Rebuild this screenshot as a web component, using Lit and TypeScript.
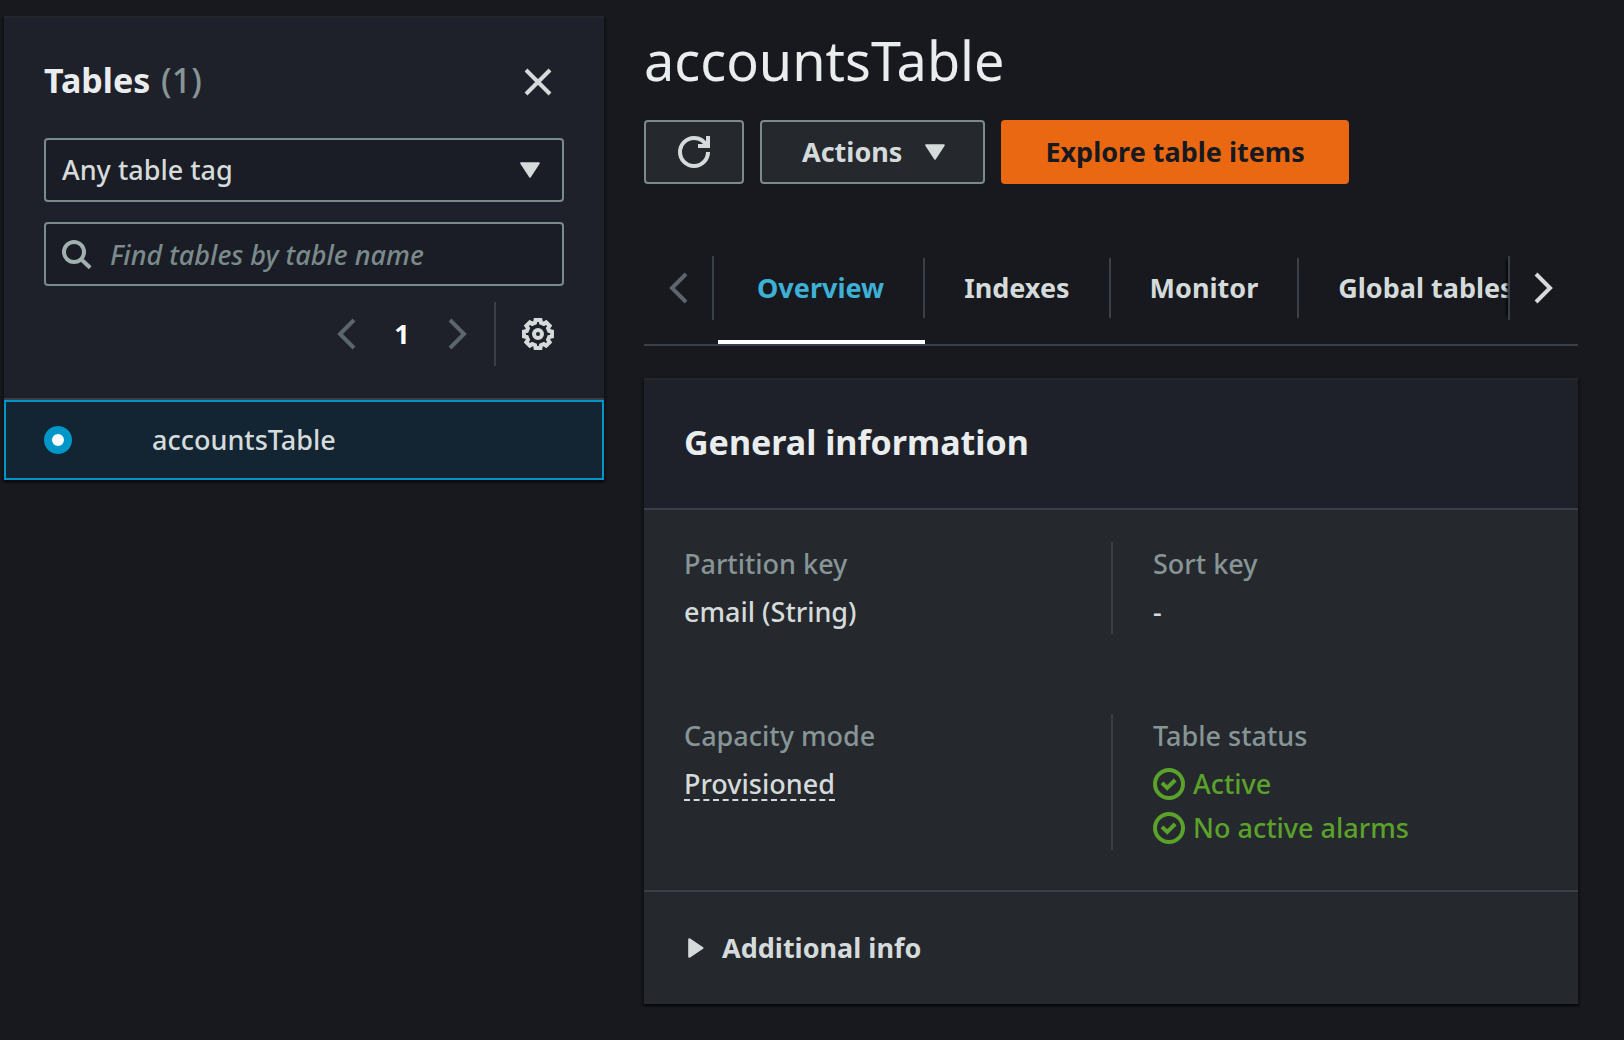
import { LitElement, html, svg, css, type TemplateResult } from "lit";
import { customElement, state } from "lit/decorators.js";

const icon = (cls: string, body: TemplateResult) =>
  html`<svg class="icon ${cls}" viewBox="0 0 16 16" aria-hidden="true">${body}</svg>`;

/** Outline of an eight-toothed gear centred on (8, 8). */
const gearOutline = () => {
  const profile = [[-10, 7.1], [10, 7.1], [15, 5.8], [30, 5.8]];
  const points: string[] = [];
  for (let tooth = 0; tooth < 8; tooth++) {
    for (const [angle, radius] of profile) {
      const a = ((tooth * 45 + angle) * Math.PI) / 180;
      points.push(`${(8 + radius * Math.cos(a)).toFixed(2)},${(8 + radius * Math.sin(a)).toFixed(2)}`);
    }
  }
  return points.join(" ");
};

const closeIcon = svg`<path d="m2 2 12 12M14 2 2 14" />`;
const searchIcon = svg`<circle cx="6" cy="7" r="5" /><path d="m9.6 10.6 4.5 4.3" />`;
const prevIcon = svg`<path d="m12 1-7 7 7 7" />`;
const nextIcon = svg`<path d="m4 1 7 7-7 7" />`;
const refreshIcon = svg`<path d="M15 8c0 3.87-3.13 7-7 7s-7-3.13-7-7 3.13-7 7-7c2.79 0 5.2 1.63 6.33 4" /><path d="M10 5h5V0" />`;
const caretDown = svg`<path class="solid" d="M3.6 4.6h8.8L8 11.3z" />`;
const caretRight = svg`<path class="solid" d="M4.6 3.6v8.8L11.3 8z" />`;
const checkIcon = svg`<circle cx="8" cy="8" r="7" /><path d="m4.5 7.4 2.6 2.6 4-4" />`;
const gearIcon = svg`<polygon points=${gearOutline()} /><circle cx="8" cy="8" r="2" />`;

@customElement("app-root")
export class AppRoot extends LitElement {
  @state() private activeTab = "Overview";

  private tabs = ["Overview", "Indexes", "Monitor", "Global tables"];

  static styles = css`
    :host {
      display: block;
      min-height: 100vh;
      background: #17191e;
      color: #d5dbdb;
      font: 500 27px/36px "Noto Sans", "Open Sans", sans-serif;
    }
    * {
      box-sizing: border-box;
    }
    h1,
    h2,
    dl,
    dd {
      margin: 0;
    }
    button,
    input,
    select {
      font: inherit;
      color: inherit;
      margin: 0;
    }
    button {
      background: none;
      border: 0;
      padding: 0;
      display: inline-flex;
      align-items: center;
      justify-content: center;
      cursor: pointer;
    }
    .icon {
      width: 32px;
      height: 32px;
      flex: none;
      display: block;
      fill: none;
      stroke: currentColor;
      stroke-width: 2;
    }
    .icon .solid {
      fill: currentColor;
      stroke-width: 1;
      stroke-linejoin: round;
    }
    .page {
      display: grid;
      grid-template-columns: 600px minmax(0, 1fr);
      align-items: start;
      gap: 40px;
      padding: 16px 46px 36px 4px;
    }
    .panel {
      border-top: 2px solid #23272b;
      box-shadow: 0 2px 2px rgba(0, 0, 0, 0.6), 2px 2px 2px rgba(0, 0, 0, 0.2), -2px 2px 2px rgba(0, 0, 0, 0.2);
    }

    .tables {
      background: #1e2129;
    }
    .tables-head {
      padding: 40px 40px 32px;
      display: grid;
      gap: 20px;
      border-bottom: 2px solid #3a3e47;
    }
    .title-row {
      display: flex;
      align-items: center;
      justify-content: space-between;
      height: 48px;
      margin-bottom: 12px;
      padding-right: 10px;
    }
    h2 {
      font-size: 34px;
      line-height: 44px;
      padding-bottom: 4px;
      color: #eaeded;
    }
    .count {
      margin-left: 2px;
      font-weight: 500;
      color: #879596;
    }
    .field {
      display: flex;
      align-items: center;
      height: 64px;
      border: 2px solid #7b8a8b;
      border-radius: 4px;
      background: #1a1d25;
      position: relative;
    }
    .field select,
    .field input {
      flex: 1;
      min-width: 0;
      height: 100%;
      border: 0;
      outline: 0;
      background: none;
      appearance: none;
      padding: 0 16px;
    }
    .field .caret {
      position: absolute;
      right: 16px;
      pointer-events: none;
    }
    .field .search {
      margin-left: 16px;
      color: #a3b0b0;
    }
    .field input::placeholder {
      color: #7b8a8b;
      font-style: italic;
      opacity: 1;
    }
    .pager {
      display: flex;
      align-items: center;
      justify-content: flex-end;
      height: 64px;
      margin-top: -4px;
      padding-right: 10px;
    }
    .pager .page-number {
      width: 80px;
      font-weight: 700;
      color: #fff;
    }
    .muted {
      color: #5c656c;
    }
    .prefs {
      height: 64px;
      margin-left: 20px;
      padding-left: 26px;
      border-left: 2px solid #3a3e47;
    }
    .row {
      display: flex;
      align-items: center;
      height: 80px;
      padding: 0 38px;
      border: 2px solid #0096c7;
      background: #132433;
      cursor: pointer;
    }
    .row input {
      appearance: none;
      width: 28px;
      height: 28px;
      margin-right: 80px;
      border: 8px solid #0096c7;
      border-radius: 50%;
      background: #fff;
    }

    main {
      padding-top: 8px;
    }
    h1 {
      font-size: 54px;
      line-height: 72px;
      font-weight: 400;
      color: #eaeded;
    }
    .actions {
      display: flex;
      gap: 16px;
      margin-top: 24px;
    }
    .btn {
      height: 64px;
      padding: 0 40px;
      border: 2px solid #7b8a8b;
      border-radius: 4px;
      background: #25282d;
      font-weight: 700;
      white-space: nowrap;
    }
    .btn.icon-only {
      padding: 0 32px;
    }
    .btn .caret {
      margin: 0 -8px 0 17px;
    }
    .btn.primary {
      padding: 0 42px;
      border-color: #ea6812;
      background: #ea6812;
      color: #16191f;
    }
    .tabs {
      display: flex;
      margin-top: 72px;
      border-bottom: 2px solid #3a3f47;
      height: 90px;
    }
    .scroll {
      width: 70px;
      height: 64px;
      flex: none;
    }
    .scroll.left {
      border-right: 2px solid #3a3f47;
    }
    .scroll.right {
      border-left: 2px solid #3a3f47;
      box-shadow: -4px 0 3px -3px #000;
      position: relative;
    }
    .tablist {
      flex: 1;
      min-width: 0;
      display: flex;
      overflow: hidden;
      padding-left: 4px;
    }
    .tab {
      flex: none;
      height: 88px;
      display: flex;
      align-items: flex-start;
      padding-top: 2px;
      border-bottom: 4px solid transparent;
      font-weight: 700;
      white-space: nowrap;
    }
    .tab span {
      height: 60px;
      line-height: 60px;
      padding: 0 39px;
      border-right: 2px solid #3a3f47;
    }
    .tab.active {
      color: #3fb0d5;
      border-color: #fff;
    }

    .card {
      margin-top: 32px;
      background: #25282d;
    }
    .card-head {
      padding: 40px;
      background: #1e2129;
      border-bottom: 2px solid #3a3e47;
    }
    .facts {
      display: grid;
      grid-template-columns: 1fr 1fr;
      row-gap: 80px;
      padding: 32px 0 40px;
    }
    .fact {
      padding: 4px 40px;
    }
    .fact:nth-child(even) {
      border-left: 2px solid #3a3e47;
    }
    .fact dt {
      color: #879596;
      line-height: 36px;
      margin-bottom: 12px;
    }
    .dashed {
      display: inline-block;
      line-height: 30px;
      border-bottom: 2px dashed #d5dbdb;
    }
    .status {
      display: flex;
      align-items: center;
      gap: 8px;
      color: #5ba22b;
    }
    .status + .status {
      margin-top: 8px;
    }
    .more {
      display: flex;
      width: 100%;
      justify-content: flex-start;
      gap: 10px;
      padding: 38px 36px;
      border-top: 2px solid #3a3e47;
      font-weight: 700;
    }
  `;

  render() {
    return html`
      <div class="page">
        <aside class="tables panel" aria-label="Tables">
          <div class="tables-head">
            <div class="title-row">
              <h2>Tables <span class="count">(1)</span></h2>
              <button type="button" aria-label="Close">${icon("", closeIcon)}</button>
            </div>
            <div class="field">
              <select aria-label="Table tag">
                <option>Any table tag</option>
              </select>
              ${icon("caret", caretDown)}
            </div>
            <label class="field">
              ${icon("search", searchIcon)}
              <input type="text" aria-label="Find tables" placeholder="Find tables by table name" />
            </label>
            <div class="pager">
              <button type="button" class="muted" aria-label="Previous page">${icon("", prevIcon)}</button>
              <button type="button" class="page-number">1</button>
              <button type="button" class="muted" aria-label="Next page">${icon("", nextIcon)}</button>
              <button type="button" class="prefs" aria-label="Preferences">${icon("", gearIcon)}</button>
            </div>
          </div>
          <label class="row">
            <input type="radio" name="table" checked />
            <span>accountsTable</span>
          </label>
        </aside>

        <main>
          <h1>accountsTable</h1>
          <div class="actions">
            <button type="button" class="btn icon-only" aria-label="Refresh">${icon("", refreshIcon)}</button>
            <button type="button" class="btn">Actions ${icon("caret", caretDown)}</button>
            <button type="button" class="btn primary">Explore table items</button>
          </div>

          <div class="tabs">
            <button type="button" class="scroll left muted" aria-label="Scroll left">${icon("", prevIcon)}</button>
            <div class="tablist" role="tablist">
              ${this.tabs.map(
                (t) => html`<button
                  type="button"
                  role="tab"
                  class="tab ${t === this.activeTab ? "active" : ""}"
                  aria-selected=${t === this.activeTab}
                  @click=${() => (this.activeTab = t)}
                ><span>${t}</span></button>`
              )}
            </div>
            <button type="button" class="scroll right" aria-label="Scroll right">${icon("", nextIcon)}</button>
          </div>

          <section class="card panel">
            <div class="card-head"><h2>General information</h2></div>
            <dl class="facts">
              <div class="fact"><dt>Partition key</dt><dd>email (String)</dd></div>
              <div class="fact"><dt>Sort key</dt><dd>-</dd></div>
              <div class="fact"><dt>Capacity mode</dt><dd><span class="dashed">Provisioned</span></dd></div>
              <div class="fact">
                <dt>Table status</dt>
                <dd class="status">${icon("", checkIcon)}Active</dd>
                <dd class="status">${icon("", checkIcon)}No active alarms</dd>
              </div>
            </dl>
            <button type="button" class="more" aria-expanded="false">${icon("", caretRight)}Additional info</button>
          </section>
        </main>
      </div>
    `;
  }
}
